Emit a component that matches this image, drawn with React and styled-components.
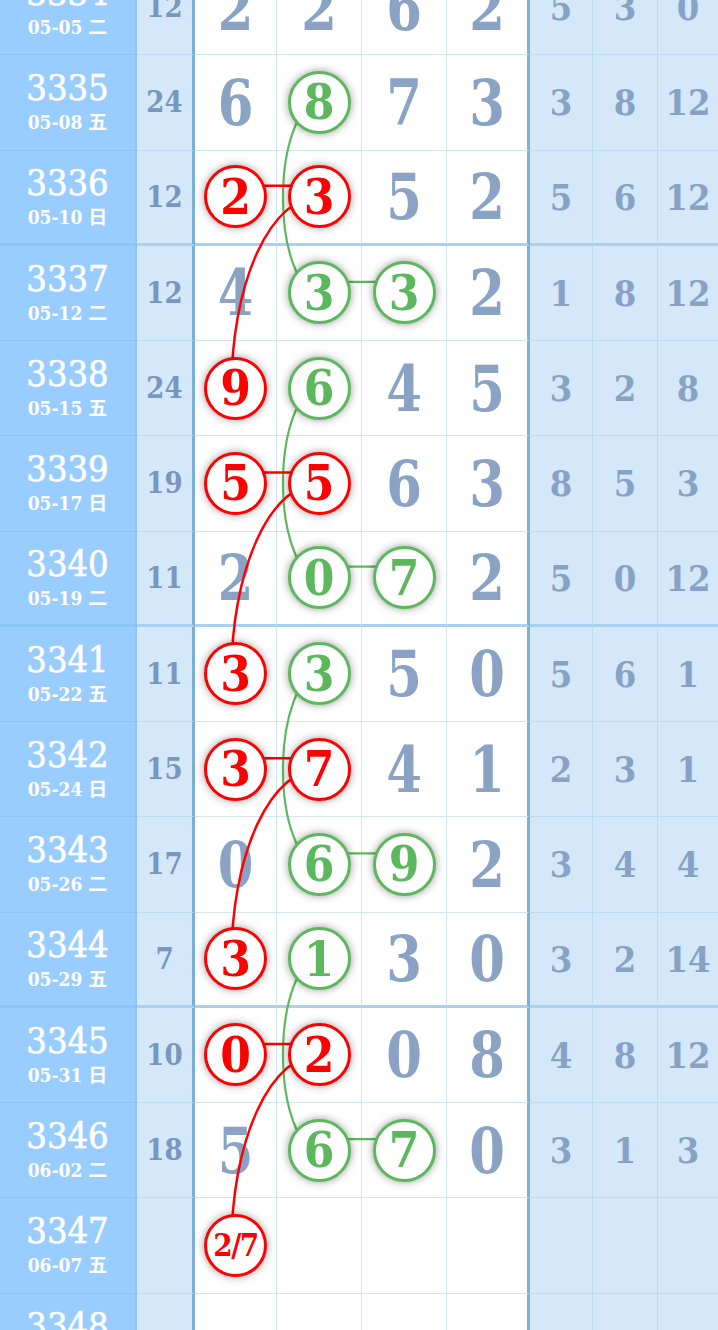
import React from 'react'
import styled, { createGlobalStyle } from 'styled-components';

const GlobalStyle = createGlobalStyle`
  html, body {
    margin: 0;
    padding: 0;
    background: #ffffff;
    overflow: hidden;
  }
  * { box-sizing: border-box; }
`;

const SERIF = `"DejaVu Serif Condensed", "DejaVu Serif", "Noto Sans CJK SC", serif`;

const ROW_H = 95.25;
const COLS = [137, 58, 82, 85, 85, 83, 63, 65, 60];
const COL_X = [235.5, 319, 404, 487];

const RED = '#ff0000';
const GREEN = '#5cb85c';

const r = (v) => ({ v, c: 'r' });
const g = (v) => ({ v, c: 'g' });

const ROWS = [
  { no: '3334', date: '05-05 二', sum: '12', cells: ['2', '2', '6', '2'], tail: ['5', '3', '0'] },
  { no: '3335', date: '05-08 五', sum: '24', cells: ['6', g('8'), '7', '3'], tail: ['3', '8', '12'] },
  { no: '3336', date: '05-10 日', sum: '12', cells: [r('2'), r('3'), '5', '2'], tail: ['5', '6', '12'], thick: true },
  { no: '3337', date: '05-12 二', sum: '12', cells: ['4', g('3'), g('3'), '2'], tail: ['1', '8', '12'] },
  { no: '3338', date: '05-15 五', sum: '24', cells: [r('9'), g('6'), '4', '5'], tail: ['3', '2', '8'] },
  { no: '3339', date: '05-17 日', sum: '19', cells: [r('5'), r('5'), '6', '3'], tail: ['8', '5', '3'] },
  { no: '3340', date: '05-19 二', sum: '11', cells: ['2', g('0'), g('7'), '2'], tail: ['5', '0', '12'], thick: true },
  { no: '3341', date: '05-22 五', sum: '11', cells: [r('3'), g('3'), '5', '0'], tail: ['5', '6', '1'] },
  { no: '3342', date: '05-24 日', sum: '15', cells: [r('3'), r('7'), '4', '1'], tail: ['2', '3', '1'] },
  { no: '3343', date: '05-26 二', sum: '17', cells: ['0', g('6'), g('9'), '2'], tail: ['3', '4', '4'] },
  { no: '3344', date: '05-29 五', sum: '7', cells: [r('3'), g('1'), '3', '0'], tail: ['3', '2', '14'], thick: true },
  { no: '3345', date: '05-31 日', sum: '10', cells: [r('0'), r('2'), '0', '8'], tail: ['4', '8', '12'] },
  { no: '3346', date: '06-02 二', sum: '18', cells: ['5', g('6'), g('7'), '0'], tail: ['3', '1', '3'] },
  { no: '3347', date: '06-07 五', sum: '', cells: [r('2/7'), '', '', ''], tail: ['', '', ''] },
  { no: '3348', date: '06-09 日', sum: '', cells: ['', '', '', ''], tail: ['', '', ''], thick: true },
];

// links: [color, fromRow, fromCol, toRow, toCol]
const LINKS = [
  ['g', 1, 1, 3, 1], ['g', 3, 1, 3, 2],
  ['r', 2, 0, 2, 1], ['r', 2, 1, 4, 0],
  ['g', 4, 1, 6, 1], ['g', 6, 1, 6, 2],
  ['r', 5, 0, 5, 1], ['r', 5, 1, 7, 0],
  ['g', 7, 1, 9, 1], ['g', 9, 1, 9, 2],
  ['r', 8, 0, 8, 1], ['r', 8, 1, 10, 0],
  ['g', 10, 1, 12, 1], ['g', 12, 1, 12, 2],
  ['r', 11, 0, 11, 1], ['r', 11, 1, 13, 0],
];

const rowCenter = (i) => i * ROW_H + (ROW_H - (ROWS[i].thick ? 3 : 1)) / 2;

const linkPath = ([, r1, c1, r2, c2]) => {
  const y1 = rowCenter(r1);
  const y2 = rowCenter(r2);
  if (r1 === r2) {
    const y = y1 - 11;
    return `M ${COL_X[c1]} ${y} L ${COL_X[c2]} ${y}`;
  }
  if (c1 === c2) {
    const x = COL_X[c1];
    return `M ${x} ${y1} A 36 ${(y2 - y1) / 2} 0 0 0 ${x} ${y2}`;
  }
  const xa = COL_X[c1];
  const xb = COL_X[c2] - 4;
  return `M ${xa} ${y1} A ${xa - xb} ${y2 - y1} 0 0 0 ${xb} ${y2}`;
};

const Viewport = styled.div`
  height: 100vh;
  overflow: hidden;
`;

const Sheet = styled.div`
  position: relative;
  width: 718px;
  margin-top: -40px;
  font-family: ${SERIF};
`;

const Row = styled.div`
  display: grid;
  grid-template-columns: ${COLS.map((w) => `${w}px`).join(' ')};
  height: ${ROW_H}px;
`;

const Cell = styled.div`
  display: flex;
  align-items: center;
  justify-content: center;
  border-bottom: ${({ $thick }) => ($thick ? '3px' : '1px')} solid ${({ $thick }) => ($thick ? '#a9d1ee' : '#cfe6f4')};
  border-right: 1px solid #cfe6f4;
`;

const IssueCell = styled(Cell)`
  flex-direction: column;
  background: #99ccff;
  border-right: 2px solid #8ec4f2;
  border-bottom-color: ${({ $thick }) => ($thick ? '#8cc4f4' : '#8ec3ef')};
  color: #ffffff;
`;

const SumCell = styled(Cell)`
  background: #d5e8fa;
  border-right: 3px solid #7bb0d5;
  border-bottom-color: ${({ $thick }) => ($thick ? '#a9d1ee' : '#bedcf2')};
  color: #7896bf;
  font-size: 29px;
  font-weight: bold;
`;

const DrawCell = styled(Cell)`
  background: #ffffff;
  border-right: ${({ $last }) => ($last ? '3px solid #7bb0d5' : '1px solid #cfe6f4')};
`;

const TailCell = styled(Cell)`
  background: #d5e8fa;
  border-right: ${({ $last }) => ($last ? 'none' : '1px solid #bcdcf1')};
  border-bottom-color: ${({ $thick }) => ($thick ? '#a9d1ee' : '#bcdcf1')};
  color: #88a2c6;
  font-size: 36px;
  font-weight: bold;
`;

const IssueNo = styled.div`
  font-size: 36px;
  line-height: 36px;
  font-weight: normal;
  -webkit-text-stroke: 0.6px #ffffff;
`;

const IssueDate = styled.div`
  font-size: 19px;
  line-height: 24px;
  font-weight: bold;
  margin-top: 4px;
`;

const Digit = styled.span`
  display: inline-block;
  font-size: 57px;
  line-height: 1;
  font-weight: bold;
  color: #8aa3c5;
  transform: scaleY(1.1);
`;

const Ball = styled.div`
  position: relative;
  z-index: 2;
  width: 63px;
  height: 63px;
  border-radius: 50%;
  border: 3px solid ${({ $color }) => ($color === 'r' ? RED : GREEN)};
  background: #ffffff;
  box-shadow: 0 0 8px rgba(0, 0, 0, 0.4);
  display: flex;
  align-items: center;
  justify-content: center;
  color: ${({ $color }) => ($color === 'r' ? RED : GREEN)};
  font-size: ${({ $small }) => ($small ? '31px' : '49px')};
  font-weight: bold;
  letter-spacing: ${({ $small }) => ($small ? '-1.5px' : '0')};
`;

const Lines = styled.svg`
  position: absolute;
  top: 0;
  left: 0;
  z-index: 1;
  pointer-events: none;
`;

const DrawValue = ({ value }) => {
  if (!value) return null;
  if (typeof value === 'object') {
    return (
      <Ball $color={value.c} $small={value.v.length > 1}>
        {value.v}
      </Ball>
    );
  }
  return <Digit>{value}</Digit>;
};

const App = () => {
  const total = ROWS.length * ROW_H;
  return (
    <Viewport>
      <GlobalStyle />
      <Sheet>
        {ROWS.map((row) => (
          <Row key={row.no}>
            <IssueCell $thick={row.thick}>
              <IssueNo>{row.no}</IssueNo>
              <IssueDate>{row.date}</IssueDate>
            </IssueCell>
            <SumCell $thick={row.thick}>{row.sum}</SumCell>
            {row.cells.map((v, i) => (
              <DrawCell key={i} $thick={row.thick} $last={i === 3}>
                <DrawValue value={v} />
              </DrawCell>
            ))}
            {row.tail.map((v, i) => (
              <TailCell key={i} $thick={row.thick} $last={i === 2}>
                {v}
              </TailCell>
            ))}
          </Row>
        ))}
        <Lines width="718" height={total} viewBox={`0 0 718 ${total}`}>
          {LINKS.map((l, i) => (
            <path
              key={i}
              d={linkPath(l)}
              fill="none"
              stroke={l[0] === 'r' ? RED : GREEN}
              strokeWidth={l[0] === 'r' ? 2.5 : 2.2}
            />
          ))}
        </Lines>
      </Sheet>
    </Viewport>
  );
};

export default App
